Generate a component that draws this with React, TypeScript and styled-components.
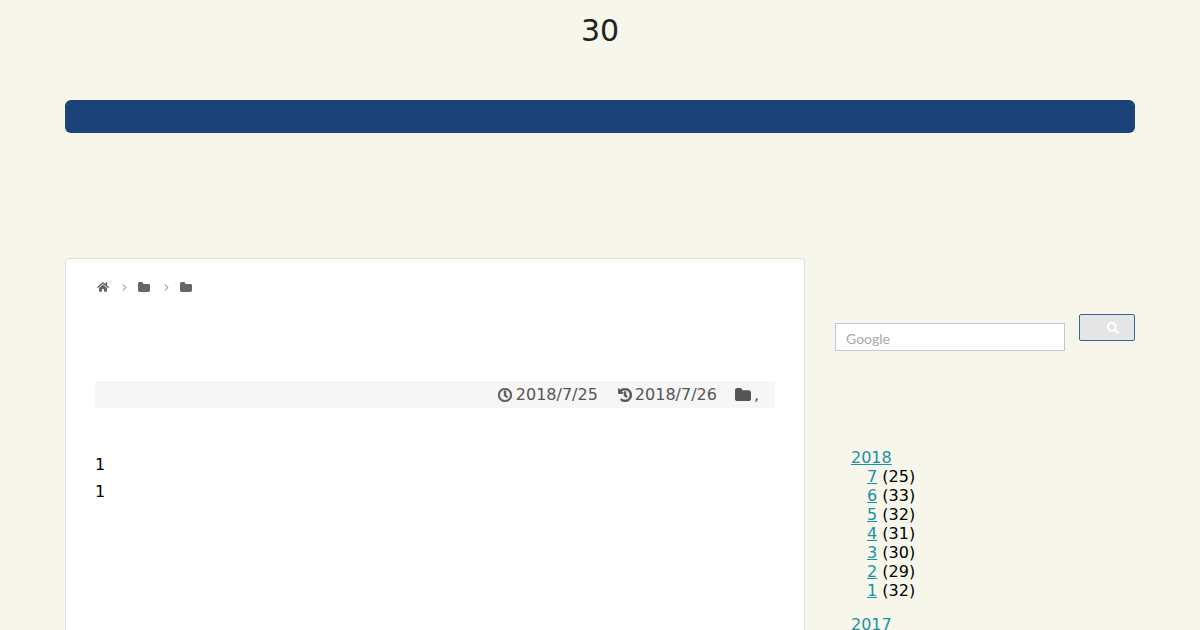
import React from 'react';
import styled, { createGlobalStyle } from 'styled-components';
import { FaHistory, FaHome, FaRegClock, FaSearch } from 'react-icons/fa';
import { ChevronRight } from 'lucide-react';

const GlobalStyle = createGlobalStyle`
    html, body {
        margin: 0;
        height: 630px;
        overflow: hidden;
        background: #f7f6ea;
        color: #000;
        font-family: "DejaVu Sans", sans-serif;
        font-size: 16px;
    }
`;

const archives = [
    { month: 7, count: 25 },
    { month: 6, count: 33 },
    { month: 5, count: 32 },
    { month: 4, count: 31 },
    { month: 3, count: 30 },
    { month: 2, count: 29 },
    { month: 1, count: 32 },
];

const FolderIcon = () => (
    <svg viewBox="0 128 1728 1408" fill="currentColor">
        <path d="M1728 608v704q0 92-66 158t-158 66h-1280q-92 0-158-66t-66-158v-960q0-92 66-158t158-66h320q92 0 158 66t66 158v32h736q92 0 158 66t66 158z" />
    </svg>
);

const App = () => {
    return (
        <>
            <GlobalStyle />
            <Header>
                <SiteTitle>30</SiteTitle>
            </Header>
            <NavBar />
            <Content>
                <Main>
                    <Breadcrumb>
                        <FaHome />
                        <ChevronRight className="sep" strokeWidth={2} />
                        <FolderIcon />
                        <ChevronRight className="sep" strokeWidth={2} />
                        <FolderIcon />
                    </Breadcrumb>
                    <DateBar>
                        <PostDate>
                            <FaRegClock />
                            2018/7/25
                        </PostDate>
                        <DateItem>
                            <FaHistory />
                            2018/7/26
                        </DateItem>
                        <CategoryItem>
                            <FolderIcon />,
                        </CategoryItem>
                    </DateBar>
                    <Paragraph>1</Paragraph>
                    <Paragraph>1</Paragraph>
                </Main>
                <Sidebar>
                    <SearchBox>
                        <SearchInput>Google</SearchInput>
                        <SearchButton>
                            <FaSearch />
                        </SearchButton>
                    </SearchBox>
                    <ArchiveList>
                        <li>
                            <YearLink href="#">2018</YearLink>
                            <MonthList>
                                {archives.map((a) => (
                                    <li key={a.month}>
                                        <MonthLink href="#">{a.month}</MonthLink> ({a.count})
                                    </li>
                                ))}
                            </MonthList>
                        </li>
                        <li>
                            <YearLink href="#">2017</YearLink>
                        </li>
                    </ArchiveList>
                </Sidebar>
            </Content>
        </>
    );
};

const Header = styled.header`
    height: 100px;
    display: flex;
    justify-content: center;
`;

const SiteTitle = styled.h1`
    margin: 12px 0 0;
    font-size: 30px;
    line-height: 38px;
    font-weight: 400;
    color: #222;
`;

const NavBar = styled.nav`
    width: 1070px;
    height: 33px;
    margin: 0 auto;
    background: #1d4179;
    border-radius: 6px;
`;

const Content = styled.div`
    width: 1070px;
    margin: 125px auto 0;
    display: flex;
    justify-content: space-between;
    align-items: flex-start;
`;

const Main = styled.main`
    box-sizing: border-box;
    width: 740px;
    height: 500px;
    padding: 0 29px;
    background: #fff;
    border: 1px solid #dfdfd6;
    border-radius: 4px;
`;

const Breadcrumb = styled.div`
    display: flex;
    align-items: center;
    height: 16px;
    margin: 20px 0 0 2px;
    color: #666;
    font-size: 12px;

    svg {
        width: 12px;
        height: 12px;
        margin-right: 11px;
    }

    svg:first-child {
        margin-right: 10px;
    }

    .sep {
        width: 11px;
        height: 11px;
        margin-right: 8px;
    }
`;

const DateBar = styled.div`
    display: flex;
    justify-content: flex-end;
    align-items: center;
    gap: 19px;
    height: 27px;
    margin-top: 86px;
    padding-right: 16px;
    background: #f6f6f6;
    color: #555;
`;

const DateItem = styled.span`
    display: flex;
    align-items: center;
    gap: 3px;

    svg {
        width: 14px;
        height: 14px;
        stroke: currentColor;
        stroke-width: 28px;
    }
`;

const PostDate = styled(DateItem)`
    gap: 4px;
    margin-right: 1px;
`;

const CategoryItem = styled(DateItem)`
    margin-left: -1px;

    svg {
        width: 16px;
        height: 13px;
        stroke: none;
    }
`;

const Paragraph = styled.p`
    margin: 0;
    line-height: 27px;

    &:first-of-type {
        margin-top: 43px;
    }
`;

const Sidebar = styled.aside`
    width: 300px;
`;

const SearchBox = styled.div`
    display: flex;
    justify-content: space-between;
    align-items: flex-start;
    margin-top: 56px;
`;

const SearchInput = styled.div`
    box-sizing: border-box;
    width: 230px;
    height: 28px;
    margin-top: 9px;
    padding-left: 10px;
    background: #fff;
    border: 1px solid #b8cbdc;
    color: #a8a8a8;
    font-family: "Lato", sans-serif;
    font-size: 14px;
    line-height: 29px;
`;

const SearchButton = styled.div`
    box-sizing: border-box;
    width: 56px;
    height: 27px;
    display: flex;
    align-items: center;
    justify-content: center;
    background: #e6e6e6;
    border: 1px solid #3b6591;
    border-radius: 2px;
    color: #fff;

    svg {
        width: 12px;
        height: 12px;
        margin-left: 12px;
    }
`;

const ArchiveList = styled.ul`
    list-style: none;
    margin: 97px 0 0;
    padding: 0 0 0 16px;
    line-height: 19px;

    > li {
        margin-bottom: 15px;
    }
`;

const MonthList = styled.ul`
    list-style: none;
    margin: 0;
    padding: 0 0 0 16px;
`;

const YearLink = styled.a`
    color: #1a91a4;
`;

const MonthLink = styled(YearLink)``;

export default App;
